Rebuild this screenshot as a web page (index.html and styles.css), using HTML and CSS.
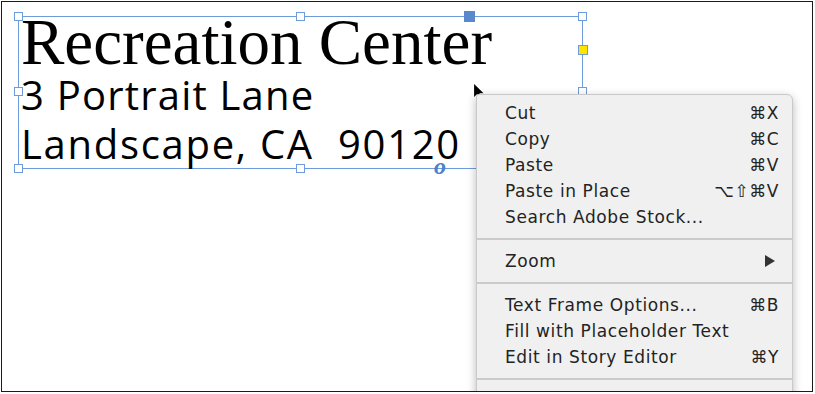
FILE: index.html
```html
<!DOCTYPE html>
<html lang="en">
<head>
<meta charset="utf-8">
<title>Recreation Center</title>
<link rel="stylesheet" href="styles.css">
</head>
<body>
<div class="stage">
  <div class="frame">
    <div class="line title">Recreation Center</div>
    <div class="line addr1">3 Portrait Lane</div>
    <div class="line addr2">Landscape, CA&nbsp; 90120</div>
    <span class="handle h-tl"></span>
    <span class="handle h-tm"></span>
    <span class="handle h-tr"></span>
    <span class="handle h-ml"></span>
    <span class="handle h-mr"></span>
    <span class="handle h-bl"></span>
    <span class="handle h-bm"></span>
    <span class="handle h-br"></span>
    <span class="port"></span>
    <span class="corner-opt"></span>
    <span class="thread">o</span>
  </div>

  <svg class="cursor" width="16" height="23" viewBox="0 0 16 23">
    <path d="M1.5 1.5 L1.5 17.5 L5.3 13.8 L8.2 20.5 L10.8 19.4 L8 12.8 L13 12.8 Z" fill="#000" stroke="#fff" stroke-width="1.2" stroke-linejoin="round"/>
  </svg>

  <div class="menu">
    <div class="item"><span>Cut</span><span class="key">⌘X</span></div>
    <div class="item"><span>Copy</span><span class="key">⌘C</span></div>
    <div class="item"><span>Paste</span><span class="key">⌘V</span></div>
    <div class="item"><span>Paste in Place</span><span class="key">⌥⇧⌘V</span></div>
    <div class="item"><span>Search Adobe Stock...</span></div>
    <div class="sep"></div>
    <div class="item"><span>Zoom</span>
      <svg class="sub" width="10" height="12" viewBox="0 0 10 12"><path d="M0 0 L10 6 L0 12 Z" fill="#333"/></svg>
    </div>
    <div class="sep"></div>
    <div class="item"><span>Text Frame Options...</span><span class="key">⌘B</span></div>
    <div class="item"><span>Fill with Placeholder Text</span></div>
    <div class="item"><span>Edit in Story Editor</span><span class="key">⌘Y</span></div>
    <div class="sep"></div>
    <div class="item"></div>
  </div>
</div>
</body>
</html>
```

FILE: styles.css
```css
html, body {
  margin: 0;
  padding: 0;
  background: #fff;
}

.stage {
  position: relative;
  box-sizing: border-box;
  width: 812px;
  height: 391px;
  margin: 1px;
  border: 1px solid #1a1a1a;
  overflow: hidden;
  background: #fff;
}

.frame {
  position: relative;
  box-sizing: border-box;
  width: 565px;
  height: 153px;
  margin: 14px 0 0 16px;
  border: 1px solid #6e9bdc;
  padding-left: 2px;
  color: #000;
}

.line {
  white-space: nowrap;
}

.title {
  font-family: "Liberation Serif", "Times New Roman", serif;
  font-size: 65px;
  line-height: 50px;
}

.addr1, .addr2 {
  font-family: "Open Sans", "Liberation Sans", sans-serif;
  font-size: 40px;
}

.addr1 { line-height: 55px; letter-spacing: 1.2px; }
.addr2 { line-height: 44px; letter-spacing: 1.7px; }

.handle {
  position: absolute;
  box-sizing: border-box;
  width: 9px;
  height: 9px;
  border: 1px solid #6e9bdc;
  background: #fff;
}

.h-tl { left: -5px; top: -5px; }
.h-tm { left: 277px; top: -5px; }
.h-tr { left: 559px; top: -5px; }
.h-ml { left: -5px; top: 70px; }
.h-mr { left: 559px; top: 70px; }
.h-bl { left: -5px; top: 147px; }
.h-bm { left: 277px; top: 147px; }
.h-br { left: 559px; top: 147px; }

.port {
  position: absolute;
  left: 445px;
  top: -6px;
  width: 11px;
  height: 11px;
  background: #5a88cc;
}

.corner-opt {
  position: absolute;
  box-sizing: border-box;
  left: 559px;
  top: 28px;
  width: 10px;
  height: 10px;
  border: 1px solid #6e9bdc;
  background: #ffe400;
}

.thread {
  position: absolute;
  left: 413px;
  top: 134px;
  width: 16px;
  height: 30px;
  text-align: center;
  font-family: "Liberation Serif", serif;
  font-style: italic;
  font-weight: bold;
  font-size: 24px;
  line-height: 30px;
  color: #4f80cc;
}

.cursor {
  position: absolute;
  left: 470px;
  top: 79px;
}

.menu {
  position: absolute;
  left: 474px;
  top: 92px;
  box-sizing: border-box;
  width: 317px;
  padding-top: 5px;
  padding-bottom: 20px;
  background: #f0f0f0;
  border: 1px solid #c9c9c9;
  border-radius: 3px 6px 0 0;
  box-shadow: 0 3px 10px rgba(0, 0, 0, 0.28);
  font-family: "DejaVu Sans", "Liberation Sans", sans-serif;
  font-size: 17px;
  letter-spacing: 0.6px;
  color: #232323;
}

.item {
  display: flex;
  justify-content: space-between;
  align-items: center;
  height: 26px;
  padding: 0 13px 0 28px;
  white-space: nowrap;
}

.key {
  letter-spacing: 0.5px;
}

.sub {
  margin-right: 4px;
}

.sep {
  height: 2px;
  margin: 8px 0;
  background: #cbcbcb;
}
```
